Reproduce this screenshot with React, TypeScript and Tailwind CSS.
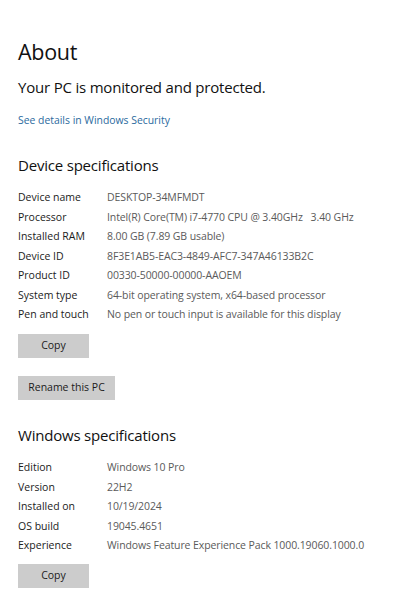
import React from "react";

const device: [string, string][] = [
  ["Device name", "DESKTOP-34MFMDT"],
  ["Processor", "Intel(R) Core(TM) i7-4770 CPU @ 3.40GHz   3.40 GHz"],
  ["Installed RAM", "8.00 GB (7.89 GB usable)"],
  ["Device ID", "8F3E1AB5-EAC3-4849-AFC7-347A46133B2C"],
  ["Product ID", "00330-50000-00000-AAOEM"],
  ["System type", "64-bit operating system, x64-based processor"],
  ["Pen and touch", "No pen or touch input is available for this display"],
];

const windows: [string, string][] = [
  ["Edition", "Windows 10 Pro"],
  ["Version", "22H2"],
  ["Installed on", "10/19/2024"],
  ["OS build", "19045.4651"],
  ["Experience", "Windows Feature Experience Pack 1000.19060.1000.0"],
];

function Rows({ rows }: { rows: [string, string][] }) {
  return (
    <div className="flex flex-col">
      {rows.map(([k, v]) => (
        <div key={k} className="flex h-[19.6px] items-center text-[10.5px]">
          <span className="w-[89px] shrink-0 text-[#1b1b1b]">{k}</span>
          <span className="whitespace-pre tracking-[-0.1px] text-[#5a5a5a]">{v}</span>
        </div>
      ))}
    </div>
  );
}

function Btn({ children, w }: { children: React.ReactNode; w: string }) {
  return (
    <div className={`flex h-[24px] items-center justify-center bg-[#cccccc] text-[10.5px] text-[#1b1b1b] ${w}`}>
      {children}
    </div>
  );
}

export default function App() {
  return (
    <div
      className="h-[598px] w-[399px] overflow-hidden bg-white pl-[18px]"
      style={{ fontFamily: '"Open Sans", "Noto Sans", sans-serif' }}
    >
      <div className="pt-[37px] text-[21.5px] leading-[30px] tracking-[-0.3px] text-[#111]">About</div>
      <div className="mt-[10px] text-[15px] leading-[20px] tracking-[-0.2px] text-[#111]">
        Your PC is monitored and protected.
      </div>
      <div className="mt-[16px] text-[10.4px] leading-[14px] text-[#2b6a9e]">See details in Windows Security</div>
      <div className="mt-[27px] text-[15px] leading-[22px] tracking-[-0.2px] text-[#111]">Device specifications</div>
      <div className="mt-[12px]">
        <Rows rows={device} />
      </div>
      <div className="mt-[9px]">
        <Btn w="w-[71px]">Copy</Btn>
      </div>
      <div className="mt-[18px]">
        <Btn w="w-[97px]">Rename this PC</Btn>
      </div>
      <div className="mt-[24px] text-[15px] leading-[22px] tracking-[-0.2px] text-[#111]">Windows specifications</div>
      <div className="mt-[12px]">
        <Rows rows={windows} />
      </div>
      <div className="mt-[8px]">
        <Btn w="w-[71px]">Copy</Btn>
      </div>
    </div>
  );
}
